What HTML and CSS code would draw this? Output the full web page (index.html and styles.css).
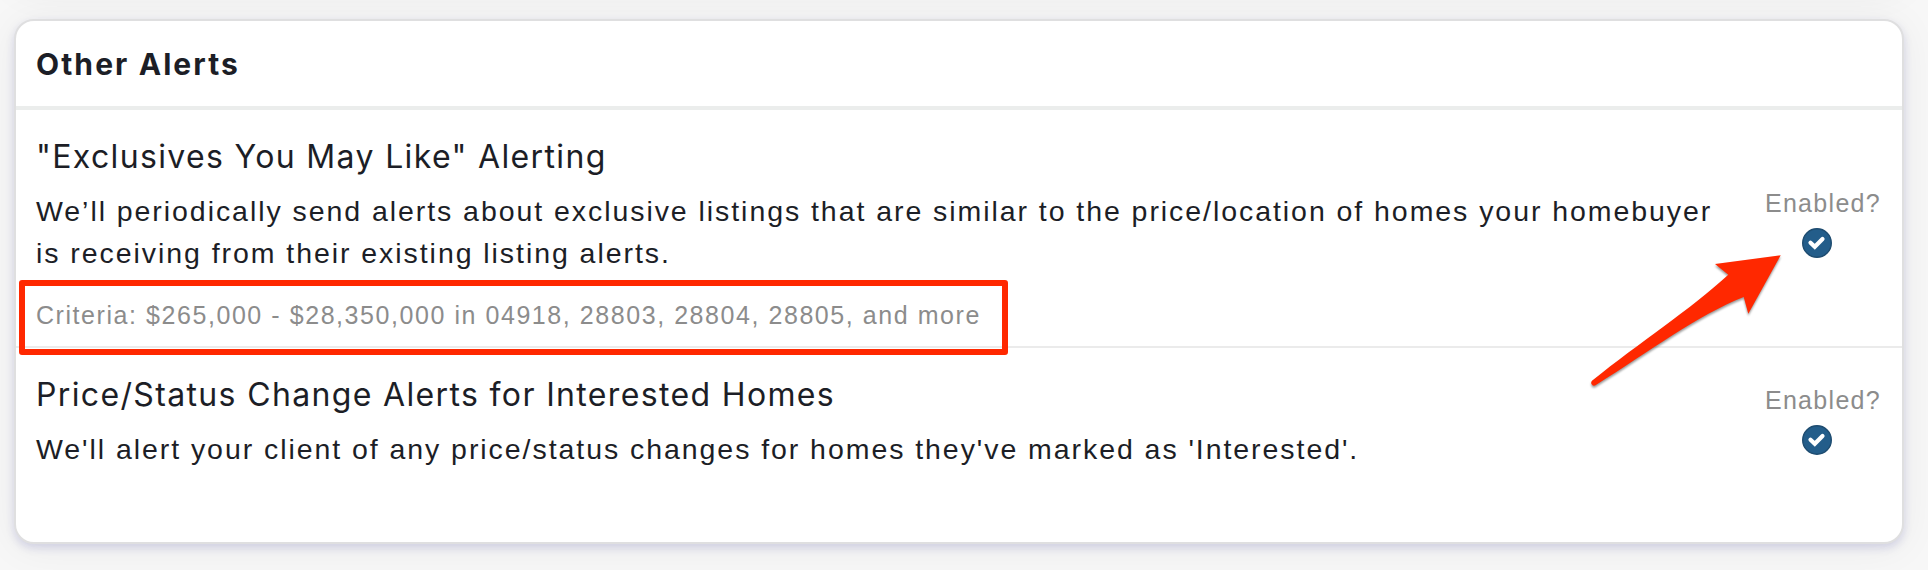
FILE: index.html
```html
<!DOCTYPE html>
<html lang="en">
<head>
    <meta charset="UTF-8">
    <meta name="viewport" content="width=device-width, initial-scale=1.0">
    <title>Other Alerts</title>
    <link rel="stylesheet" href="styles.css">
</head>
<body>
    <div class="previous-card"></div>

    <section class="card">
        <h2 class="card-header">Other Alerts</h2>

        <div class="alert-row">
            <div class="alert-text">
                <h3>"Exclusives You May Like" Alerting</h3>
                <p>We’ll periodically send alerts about exclusive listings that are similar to the price/location of homes your homebuyer<br>is receiving from their existing listing alerts.</p>
                <p class="criteria">Criteria: $265,000 - $28,350,000 in 04918, 28803, 28804, 28805, and more</p>
            </div>
            <div class="alert-toggle">
                <div class="toggle-label">Enabled?</div>
                <svg class="check" viewBox="0 0 30 30">
                    <circle cx="15" cy="15" r="14.3"/>
                    <path d="M8.5 14.7l4.3 4.1 7.7-7.7"/>
                </svg>
            </div>
        </div>

        <div class="alert-row">
            <div class="alert-text">
                <h3>Price/Status Change Alerts for Interested Homes</h3>
                <p>We'll alert your client of any price/status changes for homes they've marked as 'Interested'.</p>
            </div>
            <div class="alert-toggle">
                <div class="toggle-label">Enabled?</div>
                <svg class="check" viewBox="0 0 30 30">
                    <circle cx="15" cy="15" r="14.3"/>
                    <path d="M8.5 14.7l4.3 4.1 7.7-7.7"/>
                </svg>
            </div>
        </div>

        <!-- callouts -->
        <div class="highlight"></div>
        <svg class="arrow" viewBox="0 0 210 150">
            <path d="M200.7 15.3L168.3 73.7 163.7 57C118 75 70 111 15.5 145.3A2.9 2.9 0 0 1 12 140.8C60 102 110 70 148.3 34.7L135 24Z"/>
        </svg>
    </section>
</body>
</html>
```
FILE: styles.css
```css
body {
    margin: 0;
    height: 570px;
    overflow: hidden;
    background-color: #f7f7f7;
    color: #1c1e26;
    font-family: "Liberation Sans", Arial, sans-serif;
}
.previous-card, .card {
    box-sizing: border-box;
    width: 1890px;
    margin-left: 14px;
    border-radius: 20px;
    box-shadow: 0 4px 8px rgba(50, 50, 150, 0.16), 0 4px 40px rgba(20, 20, 50, 0.06);
}
/* bottom shadow of the card above */
.previous-card {
    height: 100px;
    margin-top: -114px;
}
.card {
    position: relative;
    height: 525px;
    margin-top: 33px;
    border: 2px solid #dfdfe0;
    background-color: #fff;
}
h2, h3, p {
    margin: 0;
    font-weight: normal;
    white-space: nowrap;
}
.card-header {
    padding: 25px 20px 24px;
    border-bottom: 4px solid #ebedec;
    font: bold 30px/36px Inter, sans-serif;
    letter-spacing: 2.1px;
}
.alert-row {
    display: flex;
    justify-content: space-between;
    padding: 28px 20px 0;
}
.alert-row:nth-of-type(1) {
    box-sizing: border-box;
    height: 238px;
    border-bottom: 2px solid #ebebeb;
}
h3 {
    font: 32px/38px Inter, sans-serif;
    letter-spacing: 1.35px;
}
p {
    margin-top: 14px;
    font-size: 28.5px;
    line-height: 42px;
    letter-spacing: 1.94px;
}
.criteria {
    margin-top: 23px;
    font-size: 25px;
    line-height: 36px;
    letter-spacing: 1.56px;
    color: #8c8c8c;
}
.alert-toggle {
    display: flex;
    flex-direction: column;
    align-items: center;
    padding-top: 6px;
}
.alert-row:nth-of-type(1) .alert-toggle {
    padding-top: 47px;
}
.toggle-label {
    margin-right: 1px;
    font-size: 25px;
    line-height: 36px;
    letter-spacing: 1.3px;
    color: #8c8c8c;
}
.check {
    width: 30px;
    height: 30px;
    margin: 7px 13px 0 0;
}
.check circle {
    fill: #235d8a;
    stroke: #1e4c70;
    stroke-width: 1.4;
}
.check path {
    fill: none;
    stroke: #fff;
    stroke-width: 4.2;
    stroke-linecap: round;
}
.highlight {
    position: absolute;
    box-sizing: border-box;
    left: 3px;
    top: 259px;
    width: 989px;
    height: 75px;
    border: 6px solid #ff2800;
    border-radius: 3px;
}
.arrow {
    position: absolute;
    left: 1564px;
    top: 219px;
    width: 210px;
    height: 150px;
    fill: #ff2800;
    filter: drop-shadow(0 2px 1px rgba(0, 0, 0, 0.4));
}
```
